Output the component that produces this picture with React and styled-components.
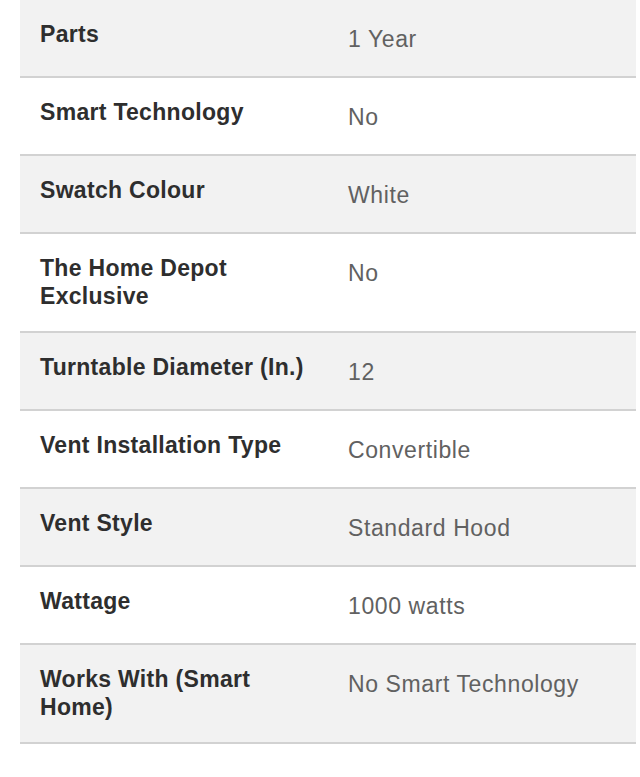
import React from "react";
import styled, { createGlobalStyle } from "styled-components";

const Global = createGlobalStyle`
  html, body { margin: 0; padding: 0; background: #ffffff; }
  body { font-family: "Liberation Sans", Arial, Helvetica, sans-serif; }
`;

const Page = styled.div`
  padding: 0 4px 0 20px;
`;

const Table = styled.div`
  display: flex;
  flex-direction: column;
`;

const Row = styled.div`
  display: grid;
  grid-template-columns: 272px 1fr;
  column-gap: 36px;
  padding: 20px 20px 21px 20px;
  background: ${(p) => (p.$shaded ? "#f2f2f2" : "#ffffff")};
  border-bottom: 2px solid #d2d2d2;
`;

const Label = styled.div`
  font-size: 23px;
  line-height: 28px;
  font-weight: 700;
  letter-spacing: 0.3px;
  color: #2e2e2e;
`;

const Value = styled.div`
  font-size: 23px;
  line-height: 28px;
  font-weight: 400;
  letter-spacing: 0.6px;
  color: #616161;
  padding: 5px 0 2px;
`;

const rows = [
  ["Parts", "1 Year"],
  ["Smart Technology", "No"],
  ["Swatch Colour", "White"],
  ["The Home Depot Exclusive", "No"],
  ["Turntable Diameter (In.)", "12"],
  ["Vent Installation Type", "Convertible"],
  ["Vent Style", "Standard Hood"],
  ["Wattage", "1000 watts"],
  ["Works With (Smart Home)", "No Smart Technology"],
];

export default function App() {
  return (
    <>
      <Global />
      <Page>
        <Table>
          {rows.map(([k, v], i) => (
            <Row key={k} $shaded={i % 2 === 0}>
              <Label>{k}</Label>
              <Value>{v}</Value>
            </Row>
          ))}
        </Table>
      </Page>
    </>
  );
}
